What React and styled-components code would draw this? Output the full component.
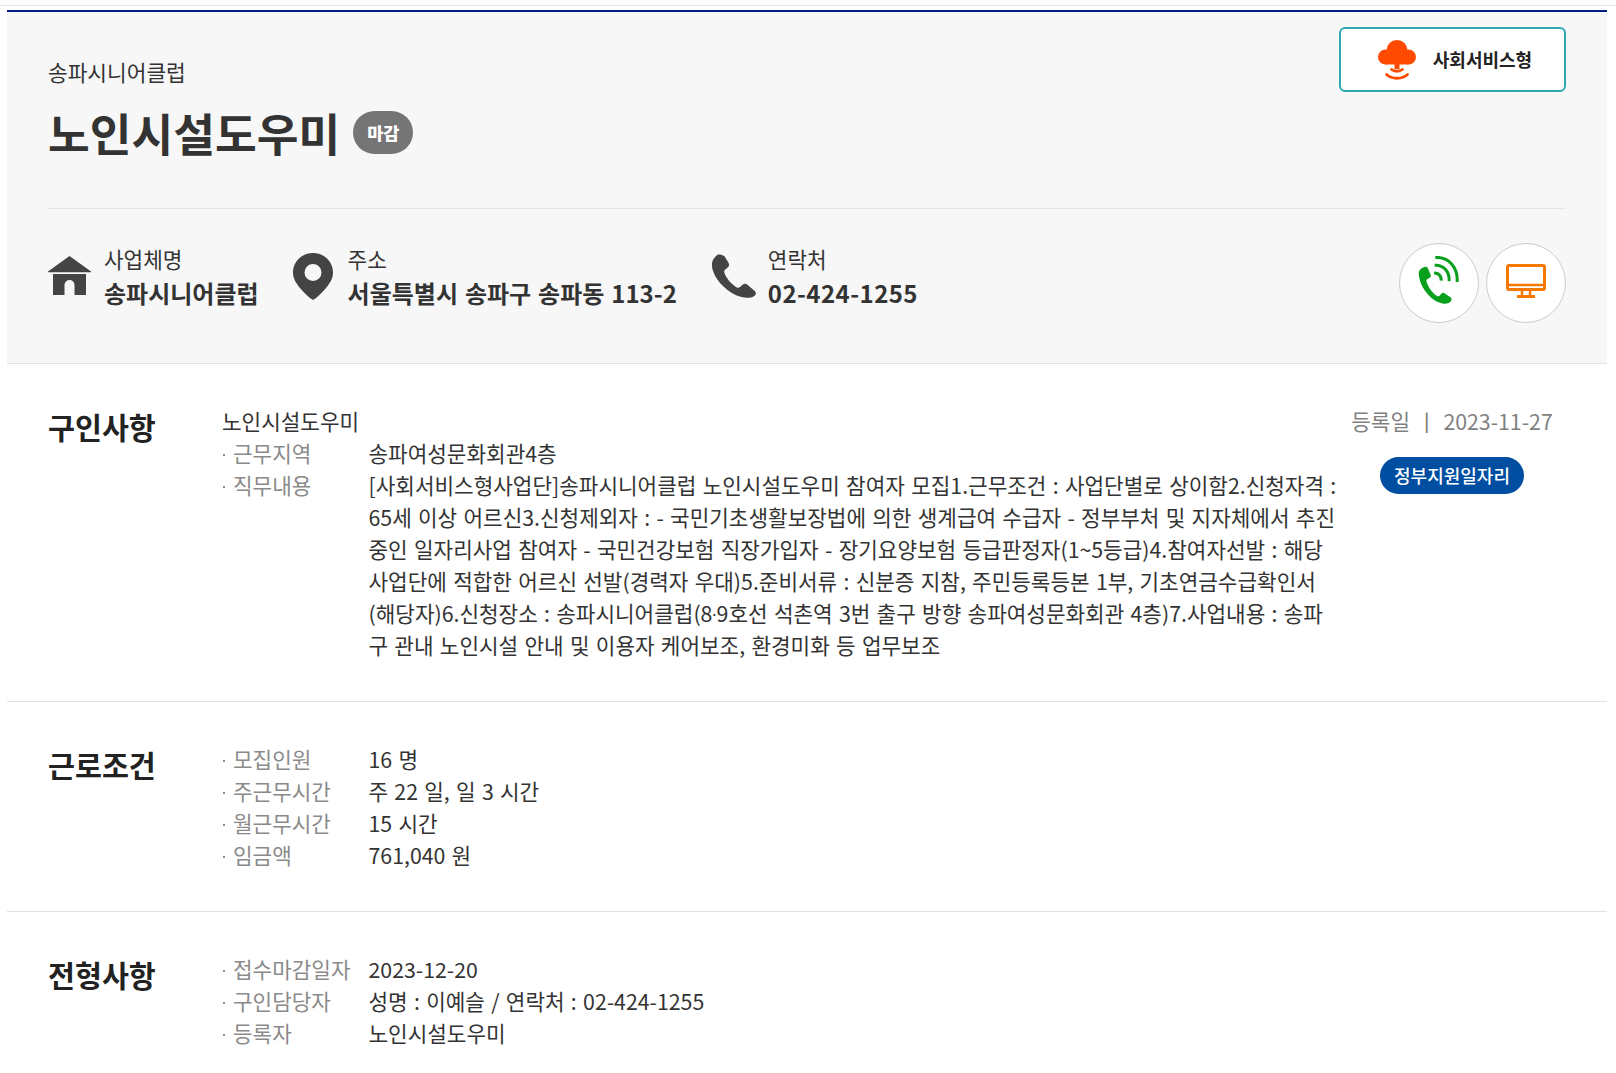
import React from 'react';
import styled, { createGlobalStyle } from 'styled-components';

const Global = createGlobalStyle`
  html, body { margin: 0; padding: 0; background: #fff; }
  body { font-family: "Noto Sans CJK KR", "Noto Sans", sans-serif; color: #333; word-spacing: 1.5px; }
`;

const TopRule = styled.div`
  height: 1px;
  margin-top: 5px;
  background: #e4e8ea;
`;

const Page = styled.div`
  margin: 4px 9px 0 7px;
  height: 1063px;
  box-sizing: border-box;
  overflow: hidden;
`;

const Head = styled.header`
  height: 354px;
  box-sizing: border-box;
  padding: 15px 41px 0;
  background: #f7f7f7;
  border-top: 2px solid #001f80;
  border-bottom: 1px solid #e2e2e2;
`;

const HeadTop = styled.div`
  height: 181px;
  display: flex;
  justify-content: space-between;
  align-items: flex-start;
  border-bottom: 1px solid #e6e6e6;
`;

const Org = styled.div`
  margin-top: 29px;
  font-size: 21.4px;
  line-height: 32px;
`;

const TitleRow = styled.div`
  margin-top: 14px;
  display: flex;
  align-items: center;
  gap: 13px;
`;

const Title = styled.h1`
  margin: 0;
  font-size: 45.4px;
  line-height: 60px;
  font-weight: 700;
  color: #333;
`;

const Closed = styled.span`
  width: 60px;
  height: 43px;
  border-radius: 22px;
  background: #757575;
  color: #fff;
  font-size: 17.5px;
  font-weight: 900;
  display: flex;
  align-items: center;
  justify-content: center;
`;

const TypeBadge = styled.div`
  width: 227px;
  height: 65px;
  box-sizing: border-box;
  border: 2px solid #2fa7b4;
  border-radius: 6px;
  padding-left: 4px;
  background: #fff;
  display: flex;
  align-items: center;
  justify-content: center;
  gap: 16px;
  font-size: 18px;
  line-height: 24px;
  font-weight: 700;
  color: #222;
`;

const BadgeText = styled.span`
  margin-top: -2px;
`;

const InfoRow = styled.div`
  display: flex;
  align-items: flex-start;
  padding-top: 34px;
`;

const Info = styled.div`
  display: flex;
  align-items: center;
  margin-right: ${p => p.$gap}px;
`;

const InfoIcon = styled.svg`
  width: ${p => p.$w}px;
  height: 54px;
  margin-right: ${p => p.$gap}px;
  flex: none;
`;

const InfoLabel = styled.div`
  font-size: 21.3px;
  line-height: 32px;
`;

const InfoValue = styled.div`
  font-size: 24px;
  line-height: 36px;
  font-weight: 700;
  white-space: nowrap;
  letter-spacing: ${p => (p.$wide ? '0.45px' : '0')};
`;

const Actions = styled.div`
  margin-left: auto;
  display: flex;
  gap: 7px;
`;

const Round = styled.div`
  width: 80px;
  height: 80px;
  box-sizing: border-box;
  border: 1px solid #ccc;
  border-radius: 50%;
  background: #fff;
  display: flex;
  align-items: center;
  justify-content: center;
`;

const ScreenSvg = styled.svg`
  margin-bottom: 4px;
`;

const Section = styled.section`
  display: flex;
  padding: ${p => p.$pad};
  border-bottom: ${p => (p.$last ? 'none' : '1px solid #e2e2e2')};
`;

const SectionTitle = styled.h2`
  width: 174px;
  flex: none;
  margin: 0;
  font-size: 29.3px;
  line-height: 42px;
  font-weight: 700;
  color: #222;
`;

const Body = styled.div`
  flex: 1;
  min-width: 0;
  font-size: 21.3px;
  line-height: 32px;
`;

const Row = styled.div`
  display: flex;
`;

const Label = styled.div`
  width: 146.500px;
  flex: none;
  color: #8a8a8a;
  white-space: nowrap;
  &::before {
    content: '';
    display: inline-block;
    width: 2px;
    height: 2px;
    margin: 0 8px 0 1px;
    background: #8a8a8a;
    vertical-align: 6px;
  }
`;

const Value = styled.div`
  flex: 1;
  min-width: 0;
`;

// the centre dot of the CJK face is too wide here
const Mid = styled.span`
  font-family: "Liberation Sans", sans-serif;
  font-size: 12.5px;
  font-weight: 700;
  line-height: 0;
  vertical-align: 3px;
`;

const Side = styled.div`
  width: 232px;
  flex: none;
  margin: -1px 39px 0 -3px;
  display: flex;
  flex-direction: column;
  align-items: center;
  font-size: 21.3px;
  line-height: 32px;
  color: #808080;
`;

const Sep = styled.span`
  margin: 0 14px;
  font-size: 18px;
  font-weight: 700;
  vertical-align: 2px;
`;

const GovPill = styled.div`
  margin-top: 20px;
  width: 144px;
  height: 37px;
  border-radius: 19px;
  background: #004ea2;
  color: #fff;
  font-size: 18px;
  font-weight: 500;
  line-height: 36px;
  text-align: center;
`;

const CloudIcon = () => (
  <svg width="40" height="42" viewBox="0 0 40 42" fill="#ff4a00">
    <circle cx="20" cy="11.500" r="10.500" />
    <circle cx="8.500" cy="18" r="7.500" />
    <circle cx="31.500" cy="18" r="7.500" />
    <path d="M8.500 12h23v13.500H22.500V30h-5v-4.500h-9z" />
    <path fill="none" stroke="#ff4a00" strokeWidth="2.800" strokeLinecap="round" d="M14.500 30.500c3 2.300 8 2.300 11 0" />
    <path fill="none" stroke="#ff4a00" strokeWidth="2.800" strokeLinecap="round" d="M9.500 35.500c5.500 5 15.500 5 21 0" />
  </svg>
);

const CallIcon = () => (
  <svg width="54" height="54" viewBox="0 0 44 44" fill="none">
    <path fill="#0aa01e" d="M8.500 9.500c-2.200 1-3.200 3-3 5.500.6 6 3.400 11.500 7.200 16 3.400 4 7.800 7 12.300 7.700 3 .5 5.800-.2 7-2.500.5-1 .2-1.900-.7-2.500l-4.800-3.300c-.9-.6-1.900-.5-2.600.3l-1.700 1.800c-.5.500-1.100.5-1.700.1-2.200-1.500-4.200-3.500-5.800-5.800-1.300-1.900-2.300-4-2.900-6.200-.2-.7 0-1.200.6-1.600l2-1.300c.9-.6 1.200-1.500.8-2.500l-2.200-5.100c-.5-1.200-1.500-1.600-2.700-1.100z" />
    <path stroke="#0aa01e" strokeWidth="2.500" d="M18 14c3.400-.4 6 2.200 5.800 6" />
    <path stroke="#0aa01e" strokeWidth="2.500" d="M18.500 7.500c7-.5 12.200 5 11.800 13" />
    <path stroke="#0aa01e" strokeWidth="2.500" d="M19 1.200c11-.5 18.500 7.800 17.800 20" />
  </svg>
);

const ScreenIcon = () => (
  <ScreenSvg width="40" height="34" viewBox="0 0 40 34" fill="none">
    <rect x="1.500" y="1.500" width="37" height="24" rx="1.500" stroke="#f57800" strokeWidth="3" />
    <path stroke="#f57800" strokeWidth="2.500" d="M1.500 21h37" />
    <path stroke="#f57800" strokeWidth="2.500" d="M16 26v6M24 26v6" />
    <path stroke="#f57800" strokeWidth="3" d="M11 32.500h18" />
  </ScreenSvg>
);

const App = () => (
  <>
    <Global />
    <TopRule />
    <Page>
      <Head>
        <HeadTop>
          <div>
            <Org>송파시니어클럽</Org>
            <TitleRow>
              <Title>노인시설도우미</Title>
              <Closed>마감</Closed>
            </TitleRow>
          </div>
          <TypeBadge>
            <CloudIcon />
            <BadgeText>사회서비스형</BadgeText>
          </TypeBadge>
        </HeadTop>
        <InfoRow>
          <Info $gap={33}>
            <InfoIcon $w={43} $gap={13} viewBox="0 0 43 54">
              <path fill="#444" d="M21.500 6 43 21.500v.8H0v-.8z" />
              <path fill="#444" fillRule="evenodd" d="M5 24h33v21H26.500V35a5 5 0 0 0-10 0v10H5z" />
            </InfoIcon>
            <div>
              <InfoLabel>사업체명</InfoLabel>
              <InfoValue>송파시니어클럽</InfoValue>
            </div>
          </Info>
          <Info $gap={34}>
            <InfoIcon $w={42} $gap={14} viewBox="0 0 42 54">
              <path fill="#444" fillRule="evenodd" d="M21 3C9.700 3 1 11.500 1 22.500c0 6 3 10.500 7 15.500 4 4.800 8.500 9.500 13 12 4.500-2.500 9-7.200 13-12 4-5 7-9.500 7-15.500C41 11.500 32.300 3 21 3zm0 11a8.500 8.500 0 1 1 0 17 8.500 8.500 0 0 1 0-17z" />
            </InfoIcon>
            <div>
              <InfoLabel>주소</InfoLabel>
              <InfoValue>서울특별시 송파구 송파동 113-2</InfoValue>
            </div>
          </Info>
          <Info $gap={0}>
            <InfoIcon $w={46} $gap={11} viewBox="0 0 46 54">
              <path fill="#444" d="M3 8.500c-2.500 3-2.600 7.500-1 12.500 2 6 6 11.500 11 16 5 4.500 10.500 8 16.500 9.800 5 1.500 10 1.500 13.500-.5 2-1.200 2.500-3.500 1-5l-7.500-6.500c-1.500-1.300-3.500-1.300-5 0l-2.500 2.300c-1 .9-2 1-3.200.3-3-1.800-5.800-4.300-8-7-2-2.500-3.500-5-4.500-8-.4-1.200 0-2 1-2.800l2.400-2c1.500-1.300 1.800-3 .8-4.800l-4-6.600C8.500 3.500 6 3.800 3 8.500z" />
            </InfoIcon>
            <div>
              <InfoLabel>연락처</InfoLabel>
              <InfoValue $wide>02-424-1255</InfoValue>
            </div>
          </Info>
          <Actions>
            <Round>
              <CallIcon />
            </Round>
            <Round>
              <ScreenIcon />
            </Round>
          </Actions>
        </InfoRow>
      </Head>

      <Section $pad="41px 0 40px 41px">
        <SectionTitle>구인사항</SectionTitle>
        <Body>
          <div>노인시설도우미</div>
          <Row>
            <Label>근무지역</Label>
            <Value>송파여성문화회관4층</Value>
          </Row>
          <Row>
            <Label>직무내용</Label>
            <Value>
              [사회서비스형사업단]송파시니어클럽 노인시설도우미 참여자 모집1.근무조건 : 사업단별로 상이함2.신청자격 : 65세 이상 어르신3.신청제외자 : - 국민기초생활보장법에 의한 생계급여 수급자 - 정부부처 및 지자체에서 추진중인 일자리사업 참여자 - 국민건강보험 직장가입자 - 장기요양보험 등급판정자(1~5등급)4.참여자선발 : 해당 사업단에 적합한 어르신 선발(경력자 우대)5.준비서류 : 신분증 지참, 주민등록등본 1부, 기초연금수급확인서 (해당자)6.신청장소 : 송파시니어클럽(8<Mid>·</Mid>9호선 석촌역 3번 출구 방향 송파여성문화회관 4층)7.사업내용 : 송파구 관내 노인시설 안내 및 이용자 케어보조, 환경미화 등 업무보조
            </Value>
          </Row>
        </Body>
        <Side>
          <div>
            등록일<Sep>|</Sep>2023-11-27
          </div>
          <GovPill>정부지원일자리</GovPill>
        </Side>
      </Section>

      <Section $pad="41px 0 40px 41px">
        <SectionTitle>근로조건</SectionTitle>
        <Body>
          <Row><Label>모집인원</Label><Value>16 명</Value></Row>
          <Row><Label>주근무시간</Label><Value>주 22 일, 일 3 시간</Value></Row>
          <Row><Label>월근무시간</Label><Value>15 시간</Value></Row>
          <Row><Label>임금액</Label><Value>761,040 원</Value></Row>
        </Body>
      </Section>

      <Section $pad="41px 0 36px 41px" $last>
        <SectionTitle>전형사항</SectionTitle>
        <Body>
          <Row><Label>접수마감일자</Label><Value>2023-12-20</Value></Row>
          <Row><Label>구인담당자</Label><Value>성명 : 이예슬 / 연락처 : 02-424-1255</Value></Row>
          <Row><Label>등록자</Label><Value>노인시설도우미</Value></Row>
        </Body>
      </Section>
    </Page>
  </>
);

export default App;
